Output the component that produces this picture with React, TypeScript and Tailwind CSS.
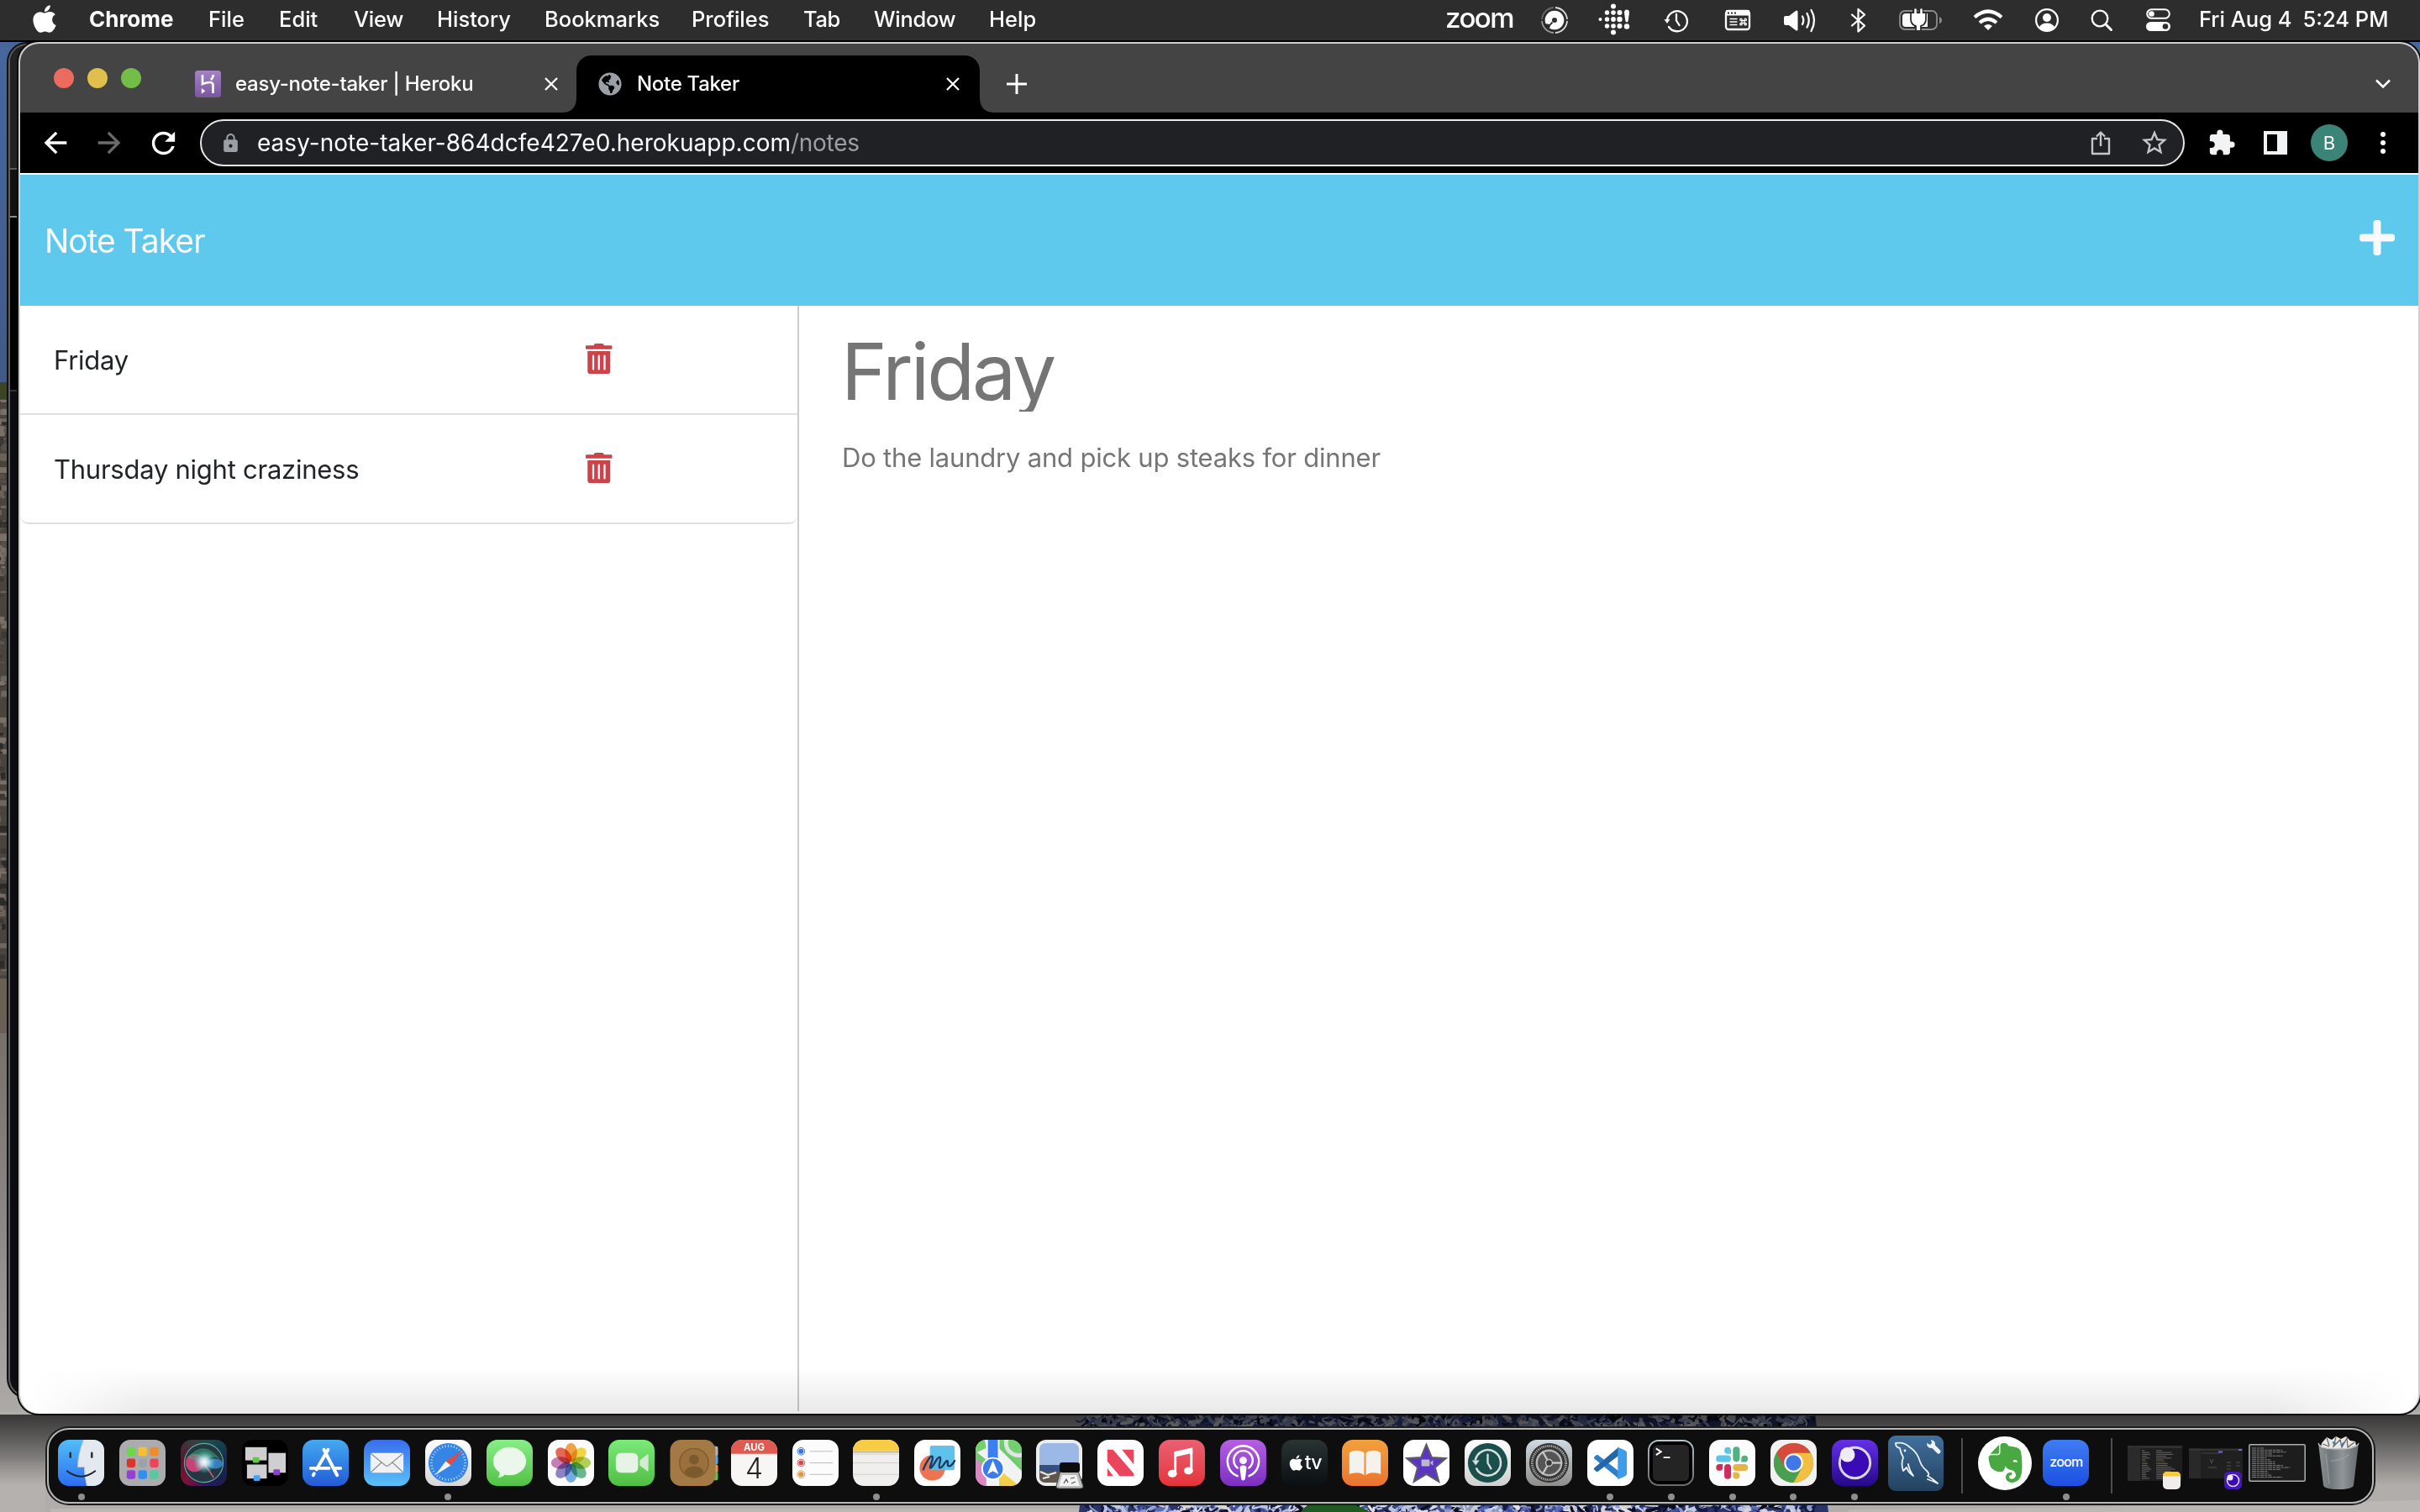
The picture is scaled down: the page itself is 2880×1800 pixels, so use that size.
import type { ReactNode } from "react";
import { FaApple, FaTrashAlt, FaPlus, FaGlobeAmericas } from "react-icons/fa";
import { MdArrowBack, MdArrowForward, MdRefresh, MdExtension, MdStarBorder, MdLock } from "react-icons/md";
import { SiEvernote } from "react-icons/si";

/* ---------- Desktop wallpaper ---------- */

function seeded(seed: number) {
  let s = seed;
  return () => {
    s = (s * 16807) % 2147483647;
    return s / 2147483647;
  };
}

function makeMural() {
  const rnd = seeded(77);
  const colors = ["#dcdfe8", "#8a9ad2", "#3c4f9c", "#b9c2e0", "#151a40", "#5a6cb8", "#d9d3d4", "#0c0d20", "#8c97ba", "#c5cadb"];
  return Array.from({ length: 1100 }, () => {
    const x = 1292 + rnd() * 866;
    const y = rnd() < 0.5 ? 1684 + rnd() * 16 : 1788 + rnd() * 14;
    const a = (rnd() - 0.5) * 30;
    const b = (rnd() - 0.5) * 24;
    return {
      d: `M${x.toFixed(1)} ${y.toFixed(1)}q${a.toFixed(1)} ${(rnd() * 10).toFixed(1)} ${b.toFixed(1)} ${(rnd() * 20 - 8).toFixed(1)}`,
      c: colors[Math.floor(rnd() * colors.length)],
      w: 1 + rnd() * 4,
    };
  });
}

function makeRocks() {
  const rnd = seeded(19);
  const colors = ["#6e6660", "#3c3935", "#7a7068", "#57504a", "#2d2b29", "#6d6258", "#4b4640"];
  return Array.from({ length: 170 }, () => ({
    x: rnd() * 10 - 8,
    y: 475 + rnd() * 680,
    w: 4 + rnd() * 10,
    h: 2 + rnd() * 7,
    c: colors[Math.floor(rnd() * colors.length)],
  }));
}

const mural = makeMural();
const rocks = makeRocks();

function Wallpaper() {
  return (
    <svg className="absolute inset-0" width="2880" height="1800" viewBox="0 0 2880 1800">
      <defs>
        <linearGradient id="sky" x1="0" y1="0" x2="0" y2="1">
          <stop offset="0" stopColor="#48689f" />
          <stop offset="1" stopColor="#3f5a86" />
        </linearGradient>
        <linearGradient id="sand" x1="0" y1="0" x2="0" y2="1">
          <stop offset="0" stopColor="#77706a" />
          <stop offset=".5" stopColor="#8b8785" />
          <stop offset="1" stopColor="#aeaaa8" />
        </linearGradient>
        <linearGradient id="shade" x1="0" y1="0" x2="0" y2="1">
          <stop offset="0" stopColor="#000" stopOpacity=".68" />
          <stop offset=".3" stopColor="#000" stopOpacity=".5" />
          <stop offset="1" stopColor="#000" stopOpacity="0" />
        </linearGradient>
      </defs>
      <rect width="2880" height="470" fill="url(#sky)" />
      <rect y="455" width="2880" height="740" fill="#4a443e" />
      <rect y="455" width="20" height="22" fill="#3b4423" />
      {rocks.map((r, i) => (
        <rect key={i} x={r.x} y={r.y} width={r.w} height={r.h} rx="1.500" fill={r.c} />
      ))}
      <rect y="1165" width="2880" height="70" fill="#6b6056" />
      <rect y="1230" width="2880" height="455" fill="url(#sand)" />
      <rect y="1680" width="2880" height="120" fill="#b0adab" />
      <path d="M0 1740h54v60H0z" fill="#b5b1af" />
      <path d="M60 1796h1230v4H60zM2200 1797l300-3 380-8v14h-680z" fill="#bab7b5" />
      <path d="M1300 1684H2160L2176 1800H1284z" fill="#2a3468" />
      {mural.map((m, i) => (
        <path key={i} d={m.d} stroke={m.c} strokeWidth={m.w} fill="none" strokeLinecap="round" />
      ))}
      <path d="M1548 1800q8-12 32-12 34 0 50 12z" fill="#1f5a22" />
      <rect y="1684" width="2880" height="84" fill="url(#shade)" />
    </svg>
  );
}

/* ---------- Menu bar ---------- */

function MenuBar() {
  return (
    <div className="absolute inset-x-0 top-0 flex h-[50px] items-center border-b-2 border-black bg-[#2d2d2d] text-[25.5px] font-medium leading-none text-white">
      <div className="w-[106px] shrink-0 pb-[4px] pl-[37px]">
        <FaApple className="h-[37px] w-[32px]" />
      </div>
      <span className="w-[142px] pb-[2px] text-[26px] font-bold">Chrome</span>
      <span className="w-[84px] pb-[2px]">File</span>
      <span className="w-[89px] pb-[2px]">Edit</span>
      <span className="w-[99px] pb-[2px] tracking-[-0.3px]">View</span>
      <span className="w-[128px] pb-[2px]">History</span>
      <span className="w-[175px] pb-[2px]">Bookmarks</span>
      <span className="w-[133px] pb-[2px]">Profiles</span>
      <span className="w-[84px] pb-[2px] tracking-[-0.4px]">Tab</span>
      <span className="w-[137px] pb-[2px] tracking-[-0.3px]">Window</span>
      <span className="w-[540px] pb-[2px]">Help</span>
      <span className="w-[103px] pb-[6px] pl-[3px] text-[33px] font-medium tracking-[-1.5px]">zoom</span>
      <StatusIcons />
      <span className="ml-[12px] whitespace-pre pb-[2px]">Fri Aug 4</span>
      <span className="ml-[13px] whitespace-pre pb-[2px]">5:24 PM</span>
    </div>
  );
}

function StatusIcons() {
  const dots = [
    [1920, 7.5, 3], [1912.5, 15, 2.7], [1920, 15, 2.8], [1927.5, 15, 3],
    [1904.5, 23, 2], [1912.5, 23, 2.7], [1920, 23, 2.9], [1927.5, 23, 3.2],
    [1912.5, 31, 2.7], [1920, 31, 2.8], [1927.5, 31, 3], [1920, 38.5, 3], [1936, 31.5, 3.2],
  ];
  return (
    <div className="flex shrink-0">
      <svg width="60" height="48" viewBox="1820 0 60 48" fill="none" stroke="#fff" strokeWidth="1.8">
        <path d="M1851 9a15 15 0 0 1 14 14M1865 25a15 15 0 0 1-14 14" stroke="#ddd" />
        <path d="M1849 9a15 15 0 0 0-14 14" stroke="#666" />
        <path d="M1835 25a15 15 0 0 0 14 14" stroke="#999" />
        <circle cx="1850" cy="24" r="11.300" fill="#fff" stroke="none" />
        <path d="M1847 25.500l-3 3.500-5-1q1 6 5 6l1-3.500 3-3z" fill="#2d2d2d" stroke="none" />
        <circle cx="1850" cy="24" r="3" fill="#2d2d2d" stroke="none" />
      </svg>
      <svg width="80" height="48" viewBox="1880 0 80 48" fill="#fff">
        {dots.map((d, i) => (
          <circle key={i} cx={d[0]} cy={d[1]} r={d[2]} />
        ))}
        <path d="M1933 15q0-3.500 3-3.500t3 3.500l-1.200 9q-.4 2.500-1.800 2.500t-1.800-2.500z" />
      </svg>
      <svg width="70" height="48" viewBox="1960 0 70 48" fill="none" stroke="#fff" strokeWidth="2.300" strokeLinecap="round">
        <path d="M1984 24a12 12 0 1 1 2 8" />
        <path d="M1995 17v7.500l3.500 5.500" />
        <path d="M1980.500 23h7l-3.500 5z" fill="#fff" stroke="none" />
      </svg>
      <svg width="70" height="48" viewBox="2030 0 70 48">
        <rect x="2054" y="13" width="28" height="22" rx="3" fill="none" stroke="#fff" strokeWidth="2.300" />
        <path d="M2054 12h28v6.500h-28z" fill="#fff" />
        <path d="M2056 15.500h2m2 0h2m2 0h2" stroke="#2d2d2d" strokeWidth="1.800" />
        <path d="M2058.500 22.500h9m-9 3.500h9m-9 3.500h9" stroke="#fff" strokeWidth="1.600" />
        <g fill="none" stroke="#fff" strokeWidth="1.300">
          <rect x="2073" y="24.500" width="3" height="3" />
          <circle cx="2072" cy="23.400" r="1.200" />
          <circle cx="2077.200" cy="23.400" r="1.200" />
          <circle cx="2072" cy="28.700" r="1.200" />
          <circle cx="2077.200" cy="28.700" r="1.200" />
        </g>
      </svg>
      <svg width="80" height="48" viewBox="2100 0 80 48" fill="none" stroke="#fff" strokeWidth="2.300" strokeLinecap="round">
        <path d="M2123 21q0-2 2-2h4l8-6q2.500-1.500 2.500 1v21q0 2.500-2.500 1l-8-6h-4q-2 0-2-2z" fill="#fff" stroke="none" />
        <path d="M2145 19.500q2.500 4.500 0 9.500M2150.500 16q4.500 8 0 16.500M2155.500 12q7 12 0 25" />
      </svg>
      <svg width="60" height="48" viewBox="2180 0 60 48" fill="none" stroke="#fff" strokeWidth="2.300" strokeLinejoin="round" strokeLinecap="round">
        <path d="M2204 17.500l15 13-7.500 7V11l7.500 6.500-15 13" />
      </svg>
      <svg width="85" height="48" viewBox="2240 0 85 48">
        <rect x="2261" y="13" width="44" height="22" rx="6" fill="none" stroke="#8c8c8c" strokeWidth="1.800" />
        <path d="M2308 20q3 1 3 4t-3 4z" fill="#8c8c8c" />
        <path d="M2268 16h10v16h-10q-4 0-4-4v-8q0-4 4-4zM2289 16h5v16h-8z" fill="#fff" />
        <path d="M2279 11v5m7-5v5" stroke="#2d2d2d" strokeWidth="6" />
        <path d="M2274 15h18v8q0 6-6 8v6h-6v-6q-6-2-6-8z" fill="#fff" stroke="#2d2d2d" strokeWidth="1.800" />
        <path d="M2279.500 11.500v6m7-6v6" stroke="#fff" strokeWidth="2.600" strokeLinecap="round" />
      </svg>
      <svg width="75" height="48" viewBox="2325 0 75 48" fill="none" stroke="#fff" strokeWidth="4.200">
        <path d="M2350 20.500q16-14 32 0" />
        <path d="M2356 27q10-8.500 20 0" />
        <path d="M2361 31q5-4 10 0l-5 5z" fill="#fff" stroke="none" />
      </svg>
      <svg width="70" height="48" viewBox="2400 0 70 48">
        <circle cx="2436" cy="24" r="12.900" fill="none" stroke="#fff" strokeWidth="2.200" />
        <circle cx="2436" cy="21" r="5" fill="#fff" />
        <path d="M2427 33q1.500-5.500 9-5.500t9 5.500q-4 4-9 4t-9-4z" fill="#fff" />
      </svg>
      <svg width="65" height="48" viewBox="2470 0 65 48" fill="none" stroke="#fff" strokeLinecap="round">
        <circle cx="2499" cy="22" r="9.300" strokeWidth="2.300" />
        <path d="M2506.500 29.500l6 6" strokeWidth="3" />
      </svg>
      <svg width="70" height="48" viewBox="2535 0 70 48">
        <rect x="2555.200" y="11.200" width="26.600" height="10.600" rx="5.300" fill="none" stroke="#fff" strokeWidth="2" />
        <circle cx="2560.500" cy="16.500" r="3.300" fill="#fff" />
        <rect x="2554" y="26" width="29" height="11" rx="5.500" fill="#fff" />
        <circle cx="2577" cy="31.500" r="3.300" fill="#2d2d2d" />
      </svg>
    </div>
  );
}

/* ---------- Chrome window ---------- */

function CloseX() {
  return (
    <svg width="16" height="16" viewBox="0 0 16 16" stroke="#fff" strokeWidth="2.300">
      <path d="M1 1l14 14M15 1L1 15" />
    </svg>
  );
}

function TabStrip() {
  return (
    <div className="flex h-[82px] items-end bg-[#444444] text-[24px] font-medium leading-none text-white">
      <div className="flex h-full w-[208px] gap-[16px] pl-[40px] pt-[29px]">
        <i className="size-[24px] rounded-full bg-[#ed6a5e]" />
        <i className="size-[24px] rounded-full bg-[#e0c04c]" />
        <i className="size-[24px] rounded-full bg-[#72be47]" />
      </div>
      <div className="flex h-[68px] w-[440px] items-center">
        <svg width="31" height="32" viewBox="0 0 31 32">
          <defs>
            <linearGradient id="hk" x1="0" y1="0" x2="0" y2="1">
              <stop offset="0" stopColor="#a483c4" />
              <stop offset="1" stopColor="#7a56a0" />
            </linearGradient>
          </defs>
          <rect width="31" height="32" rx="3.500" fill="url(#hk)" />
          <path d="M9 5v11q12-4.500 12.500 1v10M22 5q-.4 3.500-3 6" fill="none" stroke="#fff" strokeWidth="2.600" />
          <path d="M7.800 21l4.500 3.200-4.500 3.500z" fill="#fff" />
        </svg>
        <span className="ml-[17px] w-[368px] tracking-[-0.25px]">easy-note-taker | Heroku</span>
        <CloseX />
      </div>
      <div className="relative ml-[14px] flex h-[68px] w-[480px] items-center rounded-t-[18px] bg-black pl-[26px]">
        <svg className="absolute -left-[18px] bottom-0" width="18" height="18"><path d="M18 0v18H0Q18 18 18 0z" /></svg>
        <svg className="absolute -right-[18px] bottom-0" width="18" height="18"><path d="M0 0v18h18Q0 18 0 0z" /></svg>
        <FaGlobeAmericas className="size-[28px] text-[#9aa0a6]" />
        <span className="ml-[18px] w-[368px] tracking-[-0.3px]">Note Taker</span>
        <CloseX />
      </div>
      <div className="flex h-[68px] flex-1 items-center justify-between pl-[32px] pr-[33px]">
        <svg width="24" height="24" viewBox="0 0 24 24" stroke="#fff" strokeWidth="3"><path d="M12 0v24M0 12h24" /></svg>
        <svg width="18" height="12" viewBox="0 0 18 12" fill="none" stroke="#fff" strokeWidth="2.600"><path d="M1 1.500l8 8 8-8" /></svg>
      </div>
    </div>
  );
}

function Toolbar() {
  return (
    <div className="flex h-[72px] items-center bg-black text-white">
      <div className="flex w-[214px] items-center pl-[22px]">
        <MdArrowBack className="size-[40px]" />
        <MdArrowForward className="ml-[24px] size-[40px] text-[#6b6b6b]" />
        <MdRefresh className="ml-[24px] size-[41px]" />
      </div>
      <div className="flex h-[56px] w-[2362px] items-center rounded-full border-2 border-[#e6e6e6] bg-[#202124] pl-[22px] pr-[16px] text-[28px] leading-none">
        <MdLock className="size-[25px] text-[#9aa0a6]" />
        <span className="ml-[19px] tracking-[0.02px]">easy-note-taker-864dcfe427e0.herokuapp.com</span>
        <span className="flex-1 tracking-[-0.3px] text-[#9aa0a6]">/notes</span>
        <svg width="24" height="30" viewBox="0 0 24 30" fill="none" stroke="#c4c7c9" strokeWidth="2.400" strokeLinejoin="round">
          <path d="M8 10H2v18h20V10h-6M12 19V3M7 7.500l5-5 5 5" />
        </svg>
        <MdStarBorder className="ml-[34px] size-[36px] text-[#c4c7c9]" />
      </div>
      <MdExtension className="ml-[27px] size-[34px] text-[#f1f3f4]" />
      <svg className="ml-[33px]" width="28" height="28" viewBox="0 0 28 28"><path d="M0 0h28v28H0zM4 4v20h12V4z" fill="#f1f3f4" fillRule="evenodd" /></svg>
      <div className="ml-[28px] flex size-[44px] items-center justify-center rounded-full bg-[#3a8577] text-[22px] leading-none">B</div>
      <svg className="ml-[38px]" width="8" height="28" fill="#fff"><circle cx="4" cy="4" r="3" /><circle cx="4" cy="14" r="3" /><circle cx="4" cy="24" r="3" /></svg>
    </div>
  );
}

function NoteRow({ title, last }: { title: string; last?: boolean }) {
  return (
    <div className={last ? "flex h-[130px] items-center rounded-b-[10px] border-b-2 border-[#dfdfdf] pl-[40px]" : "flex h-[130px] items-center border-b-2 border-[#dfdfdf] pl-[40px]"}>
      <span className="w-[633px] text-[31px] leading-none tracking-[-0.25px] text-[#212529]">{title}</span>
      <FaTrashAlt className="mb-[3px] h-[36px] w-[31.5px] text-[#cb444a]" />
    </div>
  );
}

function ChromeWindow() {
  return (
    <div className="absolute left-[22px] top-[50px] h-[1633px] w-[2858px] overflow-hidden rounded-[24px] border-x-2 border-t-2 border-[#cfcfcf] bg-white shadow-[0_0_0_2px_#0a0a0a]">
      <TabStrip />
      <Toolbar />
      <div className="mt-[2px] flex h-[156px] items-center justify-between bg-[#5ec8ed] pl-[29px] pr-[28px] text-[#f8f9fa]">
        <span className="text-[39px] leading-none tracking-[-1.05px]">Note Taker</span>
        <FaPlus className="mb-[6px] h-[48px] w-[42px]" />
      </div>
      <div className="flex h-[1316px]">
        <div className="w-[927px] border-r-2 border-[#cccccc]">
          <NoteRow title="Friday" />
          <NoteRow title="Thursday night craziness" last />
        </div>
        <div className="pl-[51px] pt-[34px] text-[#757575]">
          <div className="-ml-[1px] h-[92px] overflow-hidden text-[93px] leading-[88px] tracking-[-3px]">Friday</div>
          <div className="mt-[39px] text-[31px] leading-none tracking-[-0.2px]">Do the laundry and pick up steaks for dinner</div>
        </div>
      </div>
      <div className="absolute inset-x-[10px] bottom-0 h-[56px] bg-linear-to-b from-transparent to-black/9 [mask-image:linear-gradient(to_right,transparent,black_140px,black_calc(100%-170px),transparent)]" />
    </div>
  );
}

function BackWindow() {
  return (
    <div className="absolute left-[10px] top-[52px] h-[1611px] w-[300px] overflow-hidden rounded-[22px] border-2 border-[#5c5c5c] bg-[#0b0d13] shadow-[0_0_0_2px_#111]">
      <div className="h-[148px] border-b-2 border-[#5a5a5a] bg-[#222]" />
      <div className="h-[57px] border-b-2 border-[#8a8a8a] bg-[#111]" />
      <div className="h-[207px] border-b-2 border-[#333] bg-black" />
    </div>
  );
}

/* ---------- Dock ---------- */

function Cell({ children, dot }: { children: ReactNode; dot?: boolean }) {
  return (
    <div className="relative flex h-[55px] w-[72.77px] shrink-0 items-center justify-center">
      {children}
      {dot && <i className="absolute bottom-[-17px] left-[calc(50%-4px)] size-[8px] rounded-full bg-[#8e8e8e]" />}
    </div>
  );
}

function Tile({ bg, dot, children }: { bg: string; dot?: boolean; children?: ReactNode }) {
  return (
    <Cell dot={dot}>
      <svg className={`size-[55px] rounded-[13px] ${bg}`} viewBox="0 0 56 56">{children}</svg>
    </Cell>
  );
}

const launchpad = ["#6bd84a", "#f7c02e", "#f08c2a", "#d9362b", "#9aa3a8", "#ee4359", "#9440d6", "#2f8ff5", "#58c8a0"];
const petals = ["#f29a33", "#f0d535", "#a9cf47", "#57b184", "#6aa7dd", "#8378bd", "#c174b0", "#e85a45"];
const ticks = Array.from({ length: 36 }, (_, i) => i * 10);

function Dock() {
  return (
    <div className="absolute left-[54px] top-[1698px] h-[94px] w-[2773px] rounded-[28px] bg-[#1d1d1d] p-[2px]">
      <div className="flex h-[90px] rounded-[26px] border-2 border-[#b6b8b7] bg-[#0e0e0e] pl-[2.5px] pt-[12px]">
        <Tile bg="bg-linear-to-b from-[#55bdf8] to-[#2f6df0]" dot>
          <path d="M31 0Q24 18 24 33h8q0 12 3 23h21V0z" fill="#e4e9f0" />
          <path d="M31 0Q24 18 24 33h8q0 12 3 23" fill="none" stroke="#b9c6d8" />
          <path d="M15 16v5M41 16v5" stroke="#222b38" strokeWidth="2.500" strokeLinecap="round" />
          <path d="M11 38q17 13 34 0" fill="none" stroke="#1c2430" strokeWidth="2" strokeLinecap="round" />
        </Tile>
        <Tile bg="bg-[#acacae]">
          {launchpad.map((c, i) => (
            <rect key={c} x={9 + (i % 3) * 14} y={9 + Math.floor(i / 3) * 14} width="10.500" height="10.500" rx="2.500" fill={c} />
          ))}
        </Tile>
        <Tile bg="bg-[conic-gradient(from_20deg,#1e4a4a,#15304f,#18204a,#2b1a5c,#7a1437,#5a1430,#3a3a3c,#1e4a4a)]">
          <defs>
            <radialGradient id="siri">
              <stop offset="0" stopColor="#fff" />
              <stop offset=".35" stopColor="#d5eefa" stopOpacity=".85" />
              <stop offset="1" stopColor="#3fd0c8" stopOpacity="0" />
            </radialGradient>
          </defs>
          <circle cx="28" cy="28" r="23.500" fill="#233842" stroke="#5fae9f" strokeWidth="1.200" />
          <ellipse cx="17" cy="28" rx="11" ry="11" fill="#e2447c" opacity=".85" />
          <ellipse cx="42" cy="29" rx="9" ry="6" fill="#3b8fe0" opacity=".8" />
          <path d="M8 22Q28 -2 48 24 34 16 28 28z" fill="#3cae7c" opacity=".5" />
          <path d="M28 28l12 18" stroke="#d55d83" strokeWidth="1.500" />
          <circle cx="29" cy="27" r="14" fill="url(#siri)" />
        </Tile>
        <Tile bg="bg-black">
          <rect x="4" y="9" width="26" height="16" fill="#cfcfd1" />
          <rect x="32" y="16" width="21" height="24" fill="#cfcfd1" />
          <rect x="6" y="30" width="24" height="17" fill="#cfcfd1" />
          <rect x="13" y="21" width="8" height="7" rx="1.500" fill="#5fcc3c" />
          <rect x="38" y="36" width="8" height="7" rx="1.500" fill="#8a3fd0" />
          <rect x="14" y="43" width="8" height="7" rx="1.500" fill="#46a4ee" />
        </Tile>
        <Tile bg="bg-linear-to-b from-[#46a9f0] to-[#2559d6]">
          <g stroke="#fff" strokeWidth="4" strokeLinecap="round">
            <path d="M26 12l16 31M31 12L17 36M14 41l-1 2M10 34.500h22M38 34.500h8" />
          </g>
        </Tile>
        <Tile bg="bg-linear-to-b from-[#3a6cec] to-[#5bc1f8]">
          <rect x="8" y="16" width="40" height="24" rx="2.500" fill="#f0f1f2" />
          <path d="M9 17l17 14q2 1.500 4 0l17-14M9 39l13-12M47 39L34 27" fill="none" stroke="#8b8f94" strokeWidth="1.200" />
        </Tile>
        <Tile bg="bg-linear-to-b from-white to-[#d6d6d8]" dot>
          <circle cx="28" cy="28" r="24" fill="#3585e6" />
          {ticks.map((a) => (
            <path key={a} d="M28 6v3" stroke="#cfe6ff" strokeWidth=".9" transform={`rotate(${a} 28 28)`} />
          ))}
          <path d="M45 13L31 31l-6-5z" fill="#e5483c" />
          <path d="M12 43l13-17 6 5z" fill="#f4f4f4" />
        </Tile>
        <Tile bg="bg-linear-to-b from-[#86ef85] to-[#53c145]">
          <ellipse cx="28" cy="26" rx="20" ry="17" fill="#eaf7ea" />
          <path d="M15 37q2 5-1 9 7-1 9-5z" fill="#eaf7ea" />
        </Tile>
        <Tile bg="bg-[#fbfbfb]">
          {petals.map((c, i) => (
            <ellipse key={c} cx="28" cy="15.500" rx="7.500" ry="11.500" fill={c} className="mix-blend-multiply" opacity=".9" transform={`rotate(${i * 45} 28 28)`} />
          ))}
        </Tile>
        <Tile bg="bg-linear-to-b from-[#7bea7a] to-[#50bf41]">
          <rect x="9" y="16" width="27" height="24" rx="6" fill="#e6f4e5" />
          <path d="M38 25l9-7q1.500-1 1.500 1v18q0 2-1.500 1l-9-7z" fill="#d5ead3" />
        </Tile>
        <Cell>
          <svg className="ml-[3px]" width="58" height="55" viewBox="0 0 58 56">
            <rect x="48" y="8" width="10" height="12" rx="2" fill="#b4b4b4" />
            <rect x="48" y="19" width="10" height="11" rx="2" fill="#4fa8e8" />
            <rect x="48" y="30" width="10" height="10" rx="2" fill="#ef9430" />
            <rect x="48" y="39" width="10" height="10" rx="2" fill="#57c24c" />
            <rect width="55" height="56" rx="13" fill="#a37a45" />
            <circle cx="29" cy="28" r="17.500" fill="#9a713d" stroke="#7c5a2d" strokeWidth="1.400" />
            <circle cx="29" cy="24" r="6" fill="#7c5a2d" />
            <path d="M17 39q3-7 12-7t12 7q-5 6-12 6t-12-6z" fill="#7c5a2d" />
          </svg>
        </Cell>
        <Tile bg="bg-[#f7f6f4]">
          <path d="M0 0h56v17H0z" fill="#e15a50" />
          <text x="28" y="13.500" textAnchor="middle" fontSize="11.500" fontWeight="700" fill="#fff">AUG</text>
          <text x="28" y="47" textAnchor="middle" fontSize="34" fontWeight="300" fill="#222">4</text>
        </Tile>
        <Tile bg="bg-[#fcfcfc]">
          {["#2f74ec", "#de4a43", "#e59235"].map((c, i) => (
            <g key={c}>
              <circle cx="10.500" cy={14 + i * 14} r="4.400" fill="#fff" stroke={c} strokeWidth="1" />
              <circle cx="10.500" cy={14 + i * 14} r="3.100" fill={c} />
              <path d={`M21 ${14 + i * 14}h28`} stroke="#bdbdbd" strokeWidth="1.200" />
            </g>
          ))}
        </Tile>
        <Tile bg="bg-[#f0efed]" dot>
          <path d="M0 0h56v14H0z" fill="#f8cd46" />
          <path d="M0 15h56" stroke="#b9b6ad" strokeWidth="1.500" />
          <path d="M1 17.500h54" stroke="#b9b6ad" strokeDasharray="1 1" />
          <path d="M0 28h56M0 42h56" stroke="#d3d1cd" />
        </Tile>
        <Tile bg="bg-white">
          <circle cx="22" cy="34" r="15.500" fill="#ee7350" />
          <rect x="19" y="7" width="30" height="30" rx="2.500" fill="#50bdea" opacity=".92" />
          <path d="M11 36C14 28 20 18 22 20.500S17 35 20 34s8-14 11-13-3 12 0 13 7-9 9-8.500-1 6.500 2 6.500 5-3 7-6.500" fill="none" stroke="#183b66" strokeWidth="2.400" strokeLinecap="round" />
        </Tile>
        <Tile bg="bg-[#6fcb6b]">
          <path d="M0 22l20 20v14H0z" fill="#dd86c6" />
          <path d="M28 26l28 26v4H30z" fill="#f6cf4a" />
          <path d="M0 14l56 44V38L28 10 12 0H0z" fill="#f1f3f3" />
          <path d="M29 0h27v34z" fill="#74cf6f" />
          <circle cx="52" cy="4" r="15" fill="none" stroke="#dfe5e3" strokeWidth="5" />
          <path d="M0 0h11l2 10-13 6z" fill="#74cf6f" />
          <path d="M13 0h16v56H13z" fill="#f1f3f3" />
          <path d="M15 0h12v30H15z" fill="#3c7ff0" />
          <circle cx="21" cy="35" r="13" fill="#3b7bea" stroke="#fff" strokeWidth="2" />
          <path d="M21 25l7 17-7-4-7 4z" fill="#fff" />
        </Tile>
        <Cell>
          <svg width="59" height="62" viewBox="0 0 59 62" className="ml-[3px] mt-[4px] shrink-0">
            <rect y="1" width="55" height="55" rx="12" fill="#ececec" />
            <rect x="4" y="5" width="47" height="47" rx="7" fill="#9cb9e6" />
            <path d="M4 31h47v10H4z" fill="#35507f" />
            <path d="M4 37l10 3 9-2 28 4v3q0 7-7 7H11q-7 0-7-7z" fill="#5f564c" />
            <path d="M5 39l9 4 10-3M8 47l8-2" stroke="#e8edf2" fill="none" strokeWidth="2" />
            <path d="M29 38h21l6 18q.5 3-3 3H27q-3.500 0-3-3z" fill="#b9bcbd" stroke="#444" />
            <path d="M31 43h17l4 13H27z" fill="#f2f2f2" />
            <path d="M33 53l3-5 2 4m3-5l5-1M42 53l5-2" stroke="#555" strokeWidth="1.200" fill="none" />
            <rect x="28" y="28" width="24" height="12" rx="3" fill="#0c0c0c" />
          </svg>
        </Cell>
        <Tile bg="bg-white">
          <rect x="12" y="12" width="32" height="32" rx="1" fill="#e9455c" />
          <path d="M18 11h11l16 20v11z" fill="#fff" />
          <path d="M11 17v9l16 19h10z" fill="#fff" opacity="0" />
          <path d="M11 29l15 16H16L11 38z" fill="#fff" opacity="0" />
          <path d="M11 14v13l15 18h11z" fill="#fff" opacity="0" />
          <path d="M11 25l17 20h-8L11 33z" fill="#fff" />
        </Tile>
        <Tile bg="bg-linear-to-b from-[#ea5f72] to-[#e5323b]">
          <path d="M20 15v26M39.500 12v26" fill="none" stroke="#fff" strokeWidth="3" />
          <path d="M18.500 14.500l22.500-5v6.500l-22.500 5z" fill="#fff" />
          <ellipse cx="16.500" cy="41" rx="5.500" ry="4.500" fill="#fff" />
          <ellipse cx="36" cy="37.500" rx="5.500" ry="4.500" fill="#fff" />
        </Tile>
        <Tile bg="bg-linear-to-b from-[#b65fe4] to-[#7c2fc0]">
          <g fill="none" stroke="#fff" strokeWidth="2.500" strokeLinecap="round">
            <path d="M21 44a19 19 0 1 1 14 0M21 34a11.500 11.500 0 1 1 14 0" />
          </g>
          <circle cx="28" cy="25" r="4.500" fill="#fff" />
          <path d="M24 34q0-3 4-3t4 3l-1.500 13q-.5 2.500-2.500 2.500t-2.500-2.500z" fill="#fff" />
        </Tile>
        <Cell>
          <div className="flex size-[55px] items-center justify-center rounded-[13px] bg-linear-to-b from-[#2a3433] to-[#0b0f12] text-[23px] font-medium leading-none tracking-[-0.8px] text-white">
            <FaApple className="size-[21px] shrink-0" />
            <span>tv</span>
          </div>
        </Cell>
        <Tile bg="bg-linear-to-b from-[#f2a03d] to-[#ea7430]">
          <path d="M9 16q3-3 9-3t9 3v27q-3-3-9-3t-9 2zM29 16q3-3 9-3t9 3v26q-3-2-9-2t-9 3z" fill="#f5f1ec" />
        </Tile>
        <Tile bg="bg-white">
          <path d="M28 6l6.500 15.500 17 1-13 11 4.500 17L28 41.500 13 50.500l4.500-17-13-11 17-1z" fill="#5b35c4" stroke="#5e5a6a" strokeWidth="2.200" />
          <rect x="22" y="24" width="10" height="8" rx="1" fill="#bdb9cc" />
          <path d="M32.500 28l3.500-3.500v7z" fill="#bdb9cc" />
        </Tile>
        <Tile bg="bg-linear-to-b from-white to-[#cfcfd0]">
          <circle cx="28" cy="28" r="24" fill="#1a4f4b" />
          <path d="M13 25a15.500 15.500 0 1 1 1 9" fill="none" stroke="#d7dedd" strokeWidth="2.600" />
          <path d="M9 25h9l-4.500 6z" fill="#d7dedd" />
          <path d="M28 18v10l4 7" fill="none" stroke="#d7dedd" strokeWidth="2.400" strokeLinecap="round" />
        </Tile>
        <Tile bg="bg-linear-to-b from-[#cfdae2] to-[#8f8d8b]">
          <circle cx="28" cy="28" r="24" fill="#333" />
          <circle cx="28" cy="28" r="20.500" fill="none" stroke="#a5a5a5" strokeWidth="3" strokeDasharray="1.400 1" />
          <circle cx="28" cy="28" r="15" fill="#555" stroke="#b5b5b5" strokeWidth="2.500" />
          <path d="M28 28h16M28 28l-8-14M28 28l-8 14" stroke="#c4c4c4" strokeWidth="2.500" />
          <circle cx="28" cy="28" r="4" fill="#3a3a3a" stroke="#c4c4c4" strokeWidth="1.500" />
        </Tile>
        <Tile bg="bg-white" dot>
          <path d="M8 21l3-2.500q1-.8 2 0L38 38v9L8.500 23q-1-1 0-2z" fill="#2f7fcb" />
          <path d="M8 36l3 2.500q1 .8 2 0L38 19v-10L8.500 34q-1 1 0 2z" fill="#2566aa" />
          <path d="M37 9l9 4q2 1 2 3v25q0 2-2 3l-9 4z" fill="#3f9cea" />
        </Tile>
        <Tile bg="bg-linear-to-b from-[#b6c9d4] to-[#6b6b6b]" dot>
          <rect x="2" y="2" width="52" height="52" rx="11" fill="#000" />
          <rect x="6" y="6" width="44" height="44" rx="6" fill="#242424" />
          <path d="M10 10.500l6 4-6 4M19 21.500h8" stroke="#fff" strokeWidth="2" fill="none" />
        </Tile>
        <Tile bg="bg-[#fcfcfc]" dot>
          <g strokeWidth="8.200" strokeLinecap="round">
            <path d="M12.500 23h10" stroke="#5cc5ed" />
            <path d="M33 12.500v10" stroke="#4fb283" />
            <path d="M33 33.500h10" stroke="#e6b442" />
            <path d="M22.500 33.500v10" stroke="#cf2b5b" />
          </g>
          <path d="M26.500 17h-4a4 4 0 1 1 4-4z" fill="#5cc5ed" />
          <path d="M39 27v-4a4 4 0 1 1 4 4z" fill="#4fb283" />
          <path d="M29 39.500h4a4 4 0 1 1-4 4z" fill="#e6b442" />
          <path d="M16.500 29.500v4a4 4 0 1 1-4-4z" fill="#cf2b5b" />
        </Tile>
        <Tile bg="bg-[#f1f1f1]" dot>
          <circle cx="28" cy="28" r="24" fill="#4a9f4f" />
          <path d="M28 28L7.200 16A24 24 0 0 1 48.800 16z" fill="#d84a3c" />
          <path d="M28 16h20.800A24 24 0 0 1 28 52l10-18z" fill="#f2bf42" />
          <path d="M7.200 16l10.500 18L28 22z" fill="#d84a3c" />
          <path d="M7.200 16L18 34l10 5-1 13A24 24 0 0 1 7.200 16z" fill="#4a9f4f" />
          <circle cx="28" cy="28" r="11.500" fill="#fff" />
          <circle cx="28" cy="28" r="9.300" fill="#4277e8" />
        </Tile>
        <Tile bg="bg-linear-to-b from-[#6430e8] to-[#27078a]" dot>
          <circle cx="28" cy="28" r="18.500" fill="#3a0bb5" stroke="#d9d4e6" strokeWidth="3" />
          <circle cx="19" cy="18" r="9" fill="#eeeaf6" />
        </Tile>
        <Cell>
          <svg width="66" height="66" viewBox="0 0 66 66" className="shrink-0 rounded-[9px] bg-linear-to-b from-[#41709f] to-[#24425f]">
            <path d="M9 9q10-2 17 5 9 6 12 17 2 6 8 11 4 4 1 6 6 3 12 9-6-3-12-5M9 9q0 5 5 6 1 6 4 11-3 8 0 16l4-4q2 6 8 10-5-7-6-14" fill="none" stroke="#eaf2f8" strokeWidth="1.800" strokeLinejoin="round" strokeLinecap="round" />
            <circle cx="20" cy="18" r="1.400" fill="#fff" />
            <path d="M53 12l7 7" stroke="#eef3f7" strokeWidth="5" strokeLinecap="round" />
            <path d="M51 5l1 4-2 2-4-2q0 6 6 6 4-1 4-5t-5-5z" fill="#eef3f7" />
          </svg>
        </Cell>
        <i className="ml-[17.5px] mt-[-2px] h-[66px] w-[2px] shrink-0 bg-[#4d4d4d]" />
        <div className="ml-[14px] flex">
          <Cell>
            <div className="flex size-[64px] shrink-0 items-center justify-center rounded-full bg-white">
              <SiEvernote className="size-[47px] text-[#4aa843]" />
            </div>
          </Cell>
          <Cell dot>
            <div className="flex size-[55px] items-center justify-center rounded-[13px] bg-linear-to-b from-[#3f7cf2] to-[#1d4fe0] pb-[3px] text-[16px] font-medium leading-none tracking-[-0.8px] text-white">zoom</div>
          </Cell>
        </div>
        <i className="ml-[17px] mt-[-2px] h-[66px] w-[2px] shrink-0 bg-[#4d4d4d]" />
        <div className="ml-[14px] flex">
          <Thumbnails />
          <Cell><TrashCan /></Cell>
        </div>
      </div>
    </div>
  );
}

function Thumbnails() {
  const rnd = seeded(5);
  const lines = Array.from({ length: 16 }, () => 14 + rnd() * 34);
  return (
    <>
      <Cell>
        <svg width="66" height="62" viewBox="0 0 66 62" className="mt-[12px] shrink-0">
          <path d="M0 4h65v42H0z" fill="#1e1e1e" />
          <path d="M0 4h15v42H0z" fill="#2b2b2b" />
          <path d="M0 4h65v3H0z" fill="#303030" />
          {lines.map((w, i) => (
            <path key={i} d={`M17 ${10 + i * 2.2}h${(w / 4).toFixed(1)}M34 ${10 + i * 2.2}h${(w / 2).toFixed(1)}`} stroke={i === 6 ? "#6d5426" : "#777"} strokeWidth=".8" />
          ))}
          <rect x="42" y="35" width="21" height="21" rx="5" fill="#efeeea" />
          <path d="M42 40.500q0-5.500 5-5.500h11q5 0 5 5.500z" fill="#f6ca3c" />
        </svg>
      </Cell>
      <Cell>
        <svg width="66" height="62" viewBox="0 0 66 62" className="mt-[12px] shrink-0">
          <path d="M1 7h64v36H1z" fill="#202020" />
          <path d="M1 7h14v36H1z" fill="#292929" />
          <path d="M1 9h64M16 13h22" stroke="#444" strokeWidth="1" />
          <path d="M36 11.500h5M60 9h4" stroke="#7d67d0" strokeWidth="1.800" />
          <path d="M26 20l2 5 2-5M24 30h10M46 24h5m6 0h5M46 28h5m6 0h5M46 32h5" stroke="#5e5e5e" strokeWidth=".8" fill="none" />
          <rect x="43" y="35" width="21" height="21" rx="5" fill="#4518b4" />
          <circle cx="53.500" cy="45.500" r="7" fill="#3a0bb5" stroke="#e2ddf0" strokeWidth="1.500" />
          <circle cx="50" cy="42" r="3.500" fill="#eeeaf6" />
        </svg>
      </Cell>
      <Cell>
        <svg width="68" height="45" viewBox="0 0 68 45" className="shrink-0">
          <rect x=".8" y=".8" width="66.400" height="43.400" rx="1.500" fill="#1d1d1d" stroke="#a9b1b5" strokeWidth="1.500" />
          {lines.map((w, i) => (
            <path key={i} d={`M4 ${5 + i * 2.3}h${w.toFixed(1)}`} stroke="#9a9a9a" strokeWidth=".8" strokeDasharray="5 .8 3 .8" />
          ))}
        </svg>
      </Cell>
    </>
  );
}

function TrashCan() {
  return (
    <svg width="50" height="65" viewBox="0 0 50 65" className="mb-[1px] shrink-0">
      <defs>
        <linearGradient id="can" x1="0" x2="1">
          <stop offset="0" stopColor="#8d9294" />
          <stop offset=".3" stopColor="#70777a" />
          <stop offset=".6" stopColor="#8f9598" />
          <stop offset="1" stopColor="#62686b" />
        </linearGradient>
      </defs>
      <path d="M1 9q0 6 24 6t24-6l-6 50q-1 5-18 5T7 59z" fill="url(#can)" />
      <path d="M5 9L11 2l6 3 5-4 6 3 6-3 5 5 6 1 1 5-8 3-24 1-10-2z" fill="#e8e8e6" />
      <path d="M11 3l3 9M22 2l-3 11 8-8 2 9 6-11 1 11 8-6M6 10l8 3" stroke="#66615c" strokeWidth="1.200" fill="none" />
      <path d="M18 8l4 2m10-2l-4 4" stroke="#3d7fb8" strokeWidth="2" />
      <path d="M1 9q2 7 24 7t24-7" fill="none" stroke="#c3c7c9" strokeWidth="1.200" />
      <path d="M10 22l4 36M38 22q-9 8-22 8" stroke="#a9afb2" strokeWidth="1.500" opacity=".5" fill="none" />
    </svg>
  );
}

export default function App() {
  return (
    <div className="relative h-[1800px] w-[2880px] overflow-hidden bg-[#8f8c8a] font-['Inter','Liberation_Sans',sans-serif]">
      <Wallpaper />
      <BackWindow />
      <ChromeWindow />
      <MenuBar />
      <Dock />
    </div>
  );
}
